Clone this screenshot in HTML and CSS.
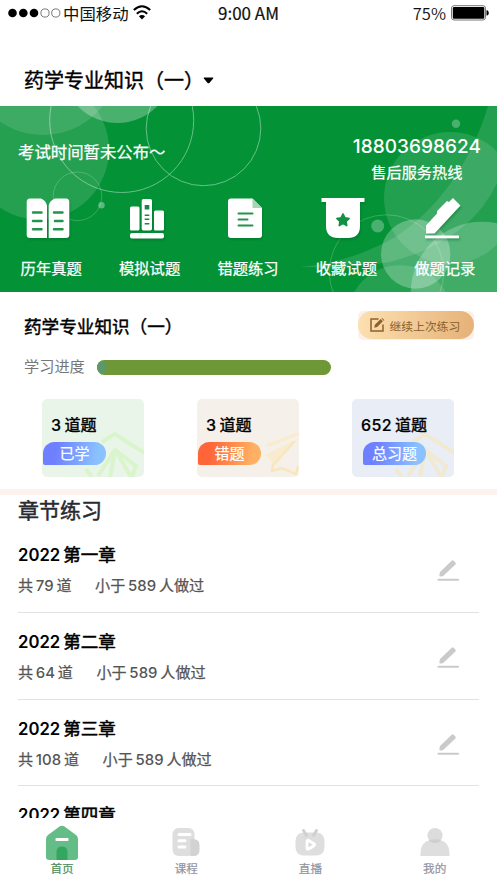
FILE: index.html
```html
<!DOCTYPE html>
<html lang="zh-CN">
<head>
<meta charset="utf-8">
<title>药学专业知识</title>
<link rel="stylesheet" href="styles.css">
</head>
<body>
<div class="app">
  <header class="status">
    <div class="carrier">
      <svg width="53" height="12" viewBox="0 0 53 12"><circle cx="4.5" cy="6" r="4.3"/><circle cx="15.3" cy="6" r="4.3"/><circle cx="26" cy="6" r="4.3"/><g fill="none" stroke="#555" stroke-width=".8"><circle cx="37" cy="6" r="4.1"/><circle cx="47.8" cy="6" r="4.1"/></g></svg>
      <span class="carrier-name">中国移动</span>
      <svg class="wifi" width="18" height="15" viewBox="0 0 18 15"><g fill="none" stroke="#000" stroke-width="2"><path d="M.8 5.1Q9-2.6 17.2 5.1"/><path d="M3.8 8.7Q9 3.7 14.2 8.7"/></g><path d="M5.9 11.2Q9 8.6 12.1 11.2L9 14.4Z"/></svg>
    </div>
    <div class="clock">9:00 AM</div>
    <div class="power"><span>75%</span>
      <svg width="38" height="16" viewBox="0 0 38 16"><rect x=".5" y=".7" width="34" height="14.3" rx="2.5" fill="#fff" stroke="#777"/><rect x="1.8" y="2" width="31.5" height="11.7" rx="1.3"/><path d="M35.5 5.2h.8q1.5 1 1.5 2.7t-1.5 2.7h-.8z"/></svg>
    </div>
  </header>

  <div class="subject"><span>药学专业知识（一）</span><svg width="11" height="7" viewBox="0 0 11 7"><path d="M1.2.5h8.6q.8.2.3.9L6.4 5.9q-.9.8-1.8 0L.9 1.4Q.4.7 1.2.5z"/></svg></div>

  <section class="hero">
    <svg class="hero-art" width="497" height="186" viewBox="0 0 497 186" fill="#fff">
      <circle cx="39" cy="43.5" r="70" opacity=".13"/>
      <circle cx="43" cy="-47" r="76" opacity=".12"/>
      <circle cx="117.5" cy="-38.5" r="55.5" opacity=".28"/>
      <circle cx="450" cy="92" r="66" opacity=".12"/>
      <path d="M488 0C470 60 435 105 397 130Q350 157 300 161Q350 163 390 156Q470 135 497 77V0Z" opacity=".12"/>
      <circle cx="415.7" cy="148" r="34.7" opacity=".27"/>
      <circle cx="482" cy="187" r="71.3" opacity=".24"/>
      <circle cx="400" cy="212" r="52.7" opacity=".13"/>
      <circle cx="456" cy="17.7" r="4.2" opacity=".28"/>
      <circle cx="377.7" cy="120" r="6.5" opacity=".28"/>
      <circle cx="101.5" cy="99.3" r="3.2" opacity=".35"/>
      <g fill="none" stroke="#fff" stroke-width=".9" opacity=".45"><circle cx="121.7" cy="14.5" r="72"/><circle cx="203.5" cy="22.4" r="57.3"/></g>
      <g fill="none" stroke="#fff" stroke-width=".8" opacity=".25"><circle cx="77.5" cy="90.3" r="24.3"/><circle cx="386.5" cy="166" r="57.2"/></g>
    </svg>
    <div class="hero-top">
      <p class="exam-time">考试时间暂未公布～</p>
      <div class="hotline"><strong>18803698624</strong><span>售后服务热线</span></div>
    </div>
    <nav class="shortcuts">
      <a><svg class="ic" width="44" height="44" viewBox="0 0 44 44"><path d="M3 1.5h12q5 2 6 7V41H4q-3.300 0-3.300-3.300V5Q.7 1.500 4 1.500zM29 1.500h11q3.300 0 3.300 3.500v32.700q0 3.300-3.300 3.300H22.700V8.500q1-5 6.300-7z"/><path d="M7 15.500h8.500M7 24h8.500M7 32.300h8.500M28 15.500h8.500M29 24h7.500M28 32.300h8.500" stroke="#259350" stroke-width="2.500" stroke-linecap="round"/></svg><span>历年真题</span></a>
      <a><svg class="ic" width="44" height="44" viewBox="0 0 44 44"><rect x="5" y="9.500" width="9.500" height="24" rx="1.500"/><rect x="16.700" y="2" width="10.300" height="31.500" rx="1.800"/><rect x="29" y="13.500" width="10" height="20" rx="1.500"/><rect x="5" y="36" width="34" height="5.600" rx="2"/><path d="M19.700 8h4.600v4.500h-4.600zM19.700 17.500h4.600v1.500h-4.600zM19.700 21.500h4.600v1.500h-4.600zM19.700 26h4.600v1.500h-4.600z" fill="#16864a"/></svg><span>模拟试题</span></a>
      <a><svg class="ic" width="44" height="44" viewBox="0 0 44 44"><path d="M8 1.500h21.500L39 11v27q0 3-3 3H8q-3 0-3-3V4.500q0-3 3-3z"/><path d="M29.500 1.500L39 11h-9.500z" fill="#a5d4b6"/><path d="M15.500 16.500h14M15.500 22.500h9M15.500 28.500h14" stroke="#259350" stroke-width="2" stroke-linecap="round"/></svg><span>错题练习</span></a>
      <a><svg class="ic" width="44" height="44" viewBox="0 0 44 44"><path d="M.5 1h43v4H39v24q0 12-12 12H17Q5 41 5 29V5H.5z"/><path d="m22 16.800 1.900 3.900 4.300.7-3.100 3 .7 4.300-3.800-2-3.800 2 .7-4.300-3.100-3 4.300-.7z" fill="#129044" stroke="#129044" stroke-width="1.500" stroke-linejoin="round"/></svg><span>收藏试题</span></a>
      <a><svg class="ic" width="44" height="44" viewBox="0 0 44 44"><path d="M33 1l7.500 7.500-26 28H6v-8L17 16.500V14L27 4l2 1z"/><rect x="5" y="38.500" width="34" height="2.800"/></svg><span>做题记录</span></a>
    </nav>
  </section>

  <section class="progress">
    <div class="progress-head"><h2>药学专业知识（一）</h2>
      <a class="resume"><span><svg width="15" height="14" viewBox="0 0 15 14"><path d="M8.500 1H1v12h12V6.500" fill="none" stroke="#8c612c" stroke-width="1.500"/><path d="M4.200 9.800l.7-3L10.700 1l2.200 2.200L7.200 9z M11.500.5l.6-.5L14.500 2.200 13.600 2.800z" fill="#8c612c"/></svg>继续上次练习</span></a>
    </div>
    <div class="meter"><span>学习进度</span><div class="bar"><i></i></div></div>
    <div class="cards">
      <div class="card green">
        <svg class="plane" width="60" height="46" viewBox="0 0 60 46" fill="none" stroke="#c9f5ad" stroke-width="4" opacity=".5"><path d="M18 11L31 3 62 23M14 45L31 19 52 35 48 46M31 20L26 46M32 20L47 46M2 38L8 46"/></svg>
        <p><b>3</b>道题</p><em>已学</em></div>
      <div class="card sand">
        <svg class="plane" width="60" height="46" viewBox="0 0 60 46" opacity=".7"><path d="M27 13L60 1V4L30 16zM26 24L56 9 36 34 32 30z" fill="#fae9c4"/><path d="M56 10L34 34 33 40 43 37 57 43 59 35" fill="none" stroke="#fae3a8" stroke-width="2.500"/></svg>
        <p><b>3</b>道题</p><em>错题</em></div>
      <div class="card blue">
        <svg class="plane" width="60" height="46" viewBox="0 0 60 46" fill="none" stroke="#fae6b5" stroke-width="4" opacity=".55"><path d="M18 11L31 3 62 23M14 45L31 19 52 35 48 46M31 20L26 46M32 20L47 46M2 38L8 46"/></svg>
        <p><b>652</b>道题</p><em>总习题</em></div>
    </div>
  </section>

  <section class="chapters">
    <h1>章节练习</h1>
    <article><div><h3><b>2022</b>第一章</h3><p><span>共<b>79</b>道</span><span>小于<b>589</b>人做过</span></p></div><svg class="pen" width="22" height="22" viewBox="0 0 22 22"><path d="M3 12L14.700.7q1-.7 1.800 0l1.900 1.900q.7.800 0 1.800L7 15.300Q5 17 2.700 16.500 2 15 3 12z"/><rect x=".5" y="18.800" width="21.500" height="2" rx=".8"/></svg></article>
    <article><div><h3><b>2022</b>第二章</h3><p><span>共<b>64</b>道</span><span>小于<b>589</b>人做过</span></p></div><svg class="pen" width="22" height="22" viewBox="0 0 22 22"><path d="M3 12L14.700.7q1-.7 1.800 0l1.900 1.900q.7.800 0 1.800L7 15.300Q5 17 2.700 16.500 2 15 3 12z"/><rect x=".5" y="18.800" width="21.500" height="2" rx=".8"/></svg></article>
    <article><div><h3><b>2022</b>第三章</h3><p><span>共<b>108</b>道</span><span>小于<b>589</b>人做过</span></p></div><svg class="pen" width="22" height="22" viewBox="0 0 22 22"><path d="M3 12L14.700.7q1-.7 1.800 0l1.900 1.900q.7.800 0 1.800L7 15.300Q5 17 2.700 16.500 2 15 3 12z"/><rect x=".5" y="18.800" width="21.500" height="2" rx=".8"/></svg></article>
    <article><div><h3><b>2022</b>第四章</h3></div></article>
  </section>

  <nav class="tabs">
    <a class="on"><svg width="34" height="36" viewBox="0 0 34 36"><path d="M14.500 1.500q2.500-1.500 5 0L31 10q2 1.500 2 4v18q0 3-3 3H4q-3 0-3-3V14q0-2.500 2-4z" fill="#64bd87"/><path d="M11.500 35v-8q0-5.500 5.500-5.500t5.500 5.500v8z" fill="#35a660"/><rect x="10.500" y="13" width="13" height="3" rx=".8" fill="#fff"/></svg><span>首页</span></a>
    <a><svg width="34" height="36" viewBox="0 0 34 36"><rect x="3.500" y="3" width="22" height="28" rx="6" fill="#dedede"/><path d="M21.500 14q9-1 9 6v5q0 6-6 6h-3z" fill="#d2d2d2"/><path d="M10 9.500h11M10 15.700h6M10 22h6" stroke="#fff" stroke-width="3" stroke-linecap="round"/></svg><span>课程</span></a>
    <a><svg width="34" height="36" viewBox="0 0 34 36"><rect x="2.500" y="7.500" width="29" height="23" rx="8" fill="#dedede"/><path d="M10.500 5.500l3 5M23.500 5.500l-3 5" stroke="#d0d0d0" stroke-width="3" stroke-linecap="round"/><path d="M14 16.500q0-1.800 1.700-1L21 18.700q1.200 1 0 2L15.700 24q-1.700.8-1.700-1z" stroke="#fff" stroke-width="2.800" fill="#dedede" stroke-linejoin="round"/></svg><span>直播</span></a>
    <a><svg width="34" height="36" viewBox="0 0 34 36"><path d="M2.500 31v-3q0-11 10-13h9q10 2 10 13v3z" fill="#dedede"/><circle cx="17" cy="10.500" r="7.600" fill="#dcdcdc"/><path d="M10.500 15Q17 13.500 23.500 15 21 18.100 17 18.100T10.500 15z" fill="#cfcfcf"/></svg><span>我的</span></a>
  </nav>
</div>
</body>
</html>
```
FILE: styles.css
```css
* { box-sizing: border-box; margin: 0; padding: 0; }
body { background: #fff; font-family: Inter, "Noto Sans CJK SC", sans-serif; color: #111; }
svg { display: block; flex: none; }
b, strong, em, i { font-style: normal; }
.app { width: 497px; height: 883px; overflow: hidden; display: flex; flex-direction: column; white-space: nowrap; }

.status { height: 26px; flex: none; display: grid; grid-template-columns: 1fr auto 1fr; align-items: center; padding: 0 8px 1px; font-family: "Noto Sans CJK SC", sans-serif; line-height: 24px; }
.carrier { display: flex; align-items: center; }
.carrier-name { font-size: 16.400px; margin: 0 4px 0 2px; }
.clock { font-size: 17px; -webkit-text-stroke: .2px; }
.power { display: flex; justify-content: flex-end; align-items: center; gap: 5px; font-size: 16.500px; font-weight: 350; }

.subject { height: 80px; flex: none; padding: 28px 24px 0; display: flex; align-items: center; font-family: "Noto Sans CJK SC", sans-serif; line-height: 30px; font-size: 20px; -webkit-text-stroke: .4px; color: #000; }
.subject svg { margin-left: -1px; }

.hero { position: relative; height: 186px; flex: none; background: #049237; color: #fff; overflow: hidden; -webkit-text-stroke: .25px; }
.hero-art { position: absolute; inset: 0; }
.hero-top { position: relative; height: 88px; padding: 0 16px 0 18px; display: flex; justify-content: space-between; }
.exam-time { font-size: 16.400px; line-height: 24px; padding-top: 34px; }
.hotline { display: flex; flex-direction: column; align-items: center; padding-top: 29px; }
.hotline strong { font-size: 19px; font-weight: 500; line-height: 24px; letter-spacing: .05px; -webkit-text-stroke: 0; }
.hotline span { font-size: 15.200px; line-height: 26px; padding-top: 1px; }
.shortcuts { position: relative; display: grid; grid-template-columns: repeat(5, 98.400px); padding: 3px 0 0 2px; }
.shortcuts a { display: flex; flex-direction: column; align-items: center; font-size: 15.300px; line-height: 24px; }
.ic { margin: 0 6px 16px 0; fill: #fff; filter: drop-shadow(1px 2px 1px #00662766); }

.progress { flex: none; height: 203px; padding-top: 19px; border-bottom: 6px solid #fdf2ee; }
.progress-head { display: flex; justify-content: space-between; height: 29px; align-items: center; padding: 0 23px 0 24px; }
h2 { font-family: "Noto Sans CJK SC", sans-serif; font-size: 17.600px; font-weight: 400; -webkit-text-stroke: .45px; line-height: 28px; color: #000; }
.resume { background: #fdf0eb; border-radius: 5px; width: 116px; height: 29px; }
.resume span { display: flex; height: 28px; border-radius: 14px; align-items: center; gap: 5px; padding-left: 11.500px; font-size: 11.800px; color: #8c612c; background: linear-gradient(100deg, #fde1b2, #e5b176); }
.meter { display: flex; align-items: center; padding-left: 24px; gap: 12px; height: 24px; margin-top: 15px; font-size: 15.200px; line-height: 24px; color: #777; }
.bar { width: 234px; height: 15px; border-radius: 8px; background: #6e9835; overflow: hidden; }
.bar i { display: block; width: 10px; height: 15px; background: #5e9865; border-radius: 0 8px 8px 0; }
.cards { display: grid; grid-template-columns: repeat(3, 102px); column-gap: 53px; padding: 20px 0 0 42px; }
.card { position: relative; height: 78px; border-radius: 5px; overflow: hidden; padding: 14px 0 0 1px; }
.green { background: #eaf5ea; }
.sand { background: #f5f0ea; }
.blue { background: #e8edf6; }
.plane { position: absolute; right: 0; bottom: 0; }
.card p { position: relative; padding-left: 8px; font-size: 16px; line-height: 24px; -webkit-text-stroke: .4px; display: flex; gap: 3px; color: #000; }
.card p b { font-weight: 500; font-size: 16px; letter-spacing: .4px; -webkit-text-stroke: .2px; }
.card em { position: relative; display: block; width: 63px; height: 23px; margin-top: 5px; border-radius: 12px 12px 12px 2px; text-align: center; font-size: 15px; line-height: 23px; color: #fff; background: linear-gradient(100deg, #6e7fff 20%, #8ac2ff 85%); -webkit-text-stroke: .2px; }
.card.sand em { background: linear-gradient(100deg, #ff6538 20%, #ffb063 85%); }
.card.blue em { margin-left: 10px; }

.chapters { flex: none; height: 323px; overflow: hidden; padding: 0 18px; }
h1 { font-size: 21px; font-weight: 400; color: #292932; line-height: 32px; height: 31px; -webkit-text-stroke: .5px; }
article { height: 86.800px; display: flex; justify-content: space-between; border-bottom: 1.500px solid #e2e2e2; padding-top: 17px; }
h3 { display: flex; gap: 3px; font-size: 17.500px; font-weight: 400; line-height: 24px; -webkit-text-stroke: .55px; color: #000; }
h3 b { font-weight: 600; font-size: 16.700px; -webkit-text-stroke: 0; }
article p { display: flex; gap: 23.500px; font-size: 15.100px; line-height: 24px; margin-top: 7px; color: #555; -webkit-text-stroke: .25px; }
article p b { font-weight: 500; font-size: 14.900px; margin: 0 2.700px; letter-spacing: .1px; -webkit-text-stroke: 0; }
.pen { fill: #cacaca; margin: 17px 20px 0 0; }

.tabs { flex: none; height: 65px; display: grid; grid-template-columns: repeat(4, 124.200px); background: #fff; padding-top: 7px; }
.tabs a { display: flex; flex-direction: column; align-items: center; font-size: 11.600px; line-height: 14px; color: #92929e; -webkit-text-stroke: .2px; }
.tabs span { margin-top: 1px; }
.tabs .on { color: #4e8c5b; }
```
